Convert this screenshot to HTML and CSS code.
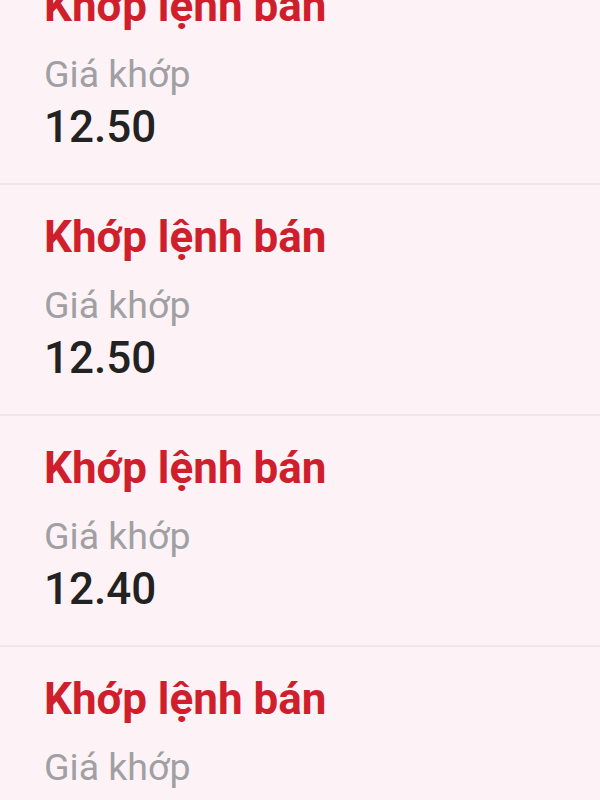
FILE: index.html
```html
<!DOCTYPE html>
<html lang="vi">
<head>
  <meta charset="UTF-8">
  <meta name="viewport" content="width=device-width, initial-scale=1.0">
  <title>Khớp lệnh</title>
  <link rel="stylesheet" href="styles.css">
</head>
<body>
  <!-- danh sách khớp lệnh -->
  <ul class="match-list">
    <li class="match-item">
      <h2 class="match-title">Khớp lệnh bán</h2>
      <p class="match-label">Giá khớp</p>
      <p class="match-price">12.50</p>
    </li>
    <li class="match-item">
      <h2 class="match-title">Khớp lệnh bán</h2>
      <p class="match-label">Giá khớp</p>
      <p class="match-price">12.50</p>
    </li>
    <li class="match-item">
      <h2 class="match-title">Khớp lệnh bán</h2>
      <p class="match-label">Giá khớp</p>
      <p class="match-price">12.40</p>
    </li>
    <li class="match-item">
      <h2 class="match-title">Khớp lệnh bán</h2>
      <p class="match-label">Giá khớp</p>
      <p class="match-price">12.40</p>
    </li>
  </ul>
</body>
</html>
```

FILE: styles.css
```css
/* Reset */
* {
  margin: 0;
  padding: 0;
  box-sizing: border-box;
}
body {
  font-family: Roboto, "Liberation Sans", sans-serif;
  background: #fdf3f6;
  color: #222;
  overflow: hidden;
}
/* Danh sách */
.match-list {
  list-style: none;
  margin-top: -46px;
}
.match-item {
  padding: 27px 20px 31px 44px;
  border-bottom: 2px solid #f0e5e8;
}
.match-title {
  font-size: 44px;
  line-height: 50px;
  font-weight: 700;
  color: #cf1f2c;
}
.match-label {
  margin-top: 21px;
  font-size: 37.5px;
  line-height: 44px;
  color: #a0a0a4;
}
.match-price {
  margin-top: 6px;
  font-size: 44px;
  line-height: 50px;
  font-weight: 500;
  color: #222;
}
```
